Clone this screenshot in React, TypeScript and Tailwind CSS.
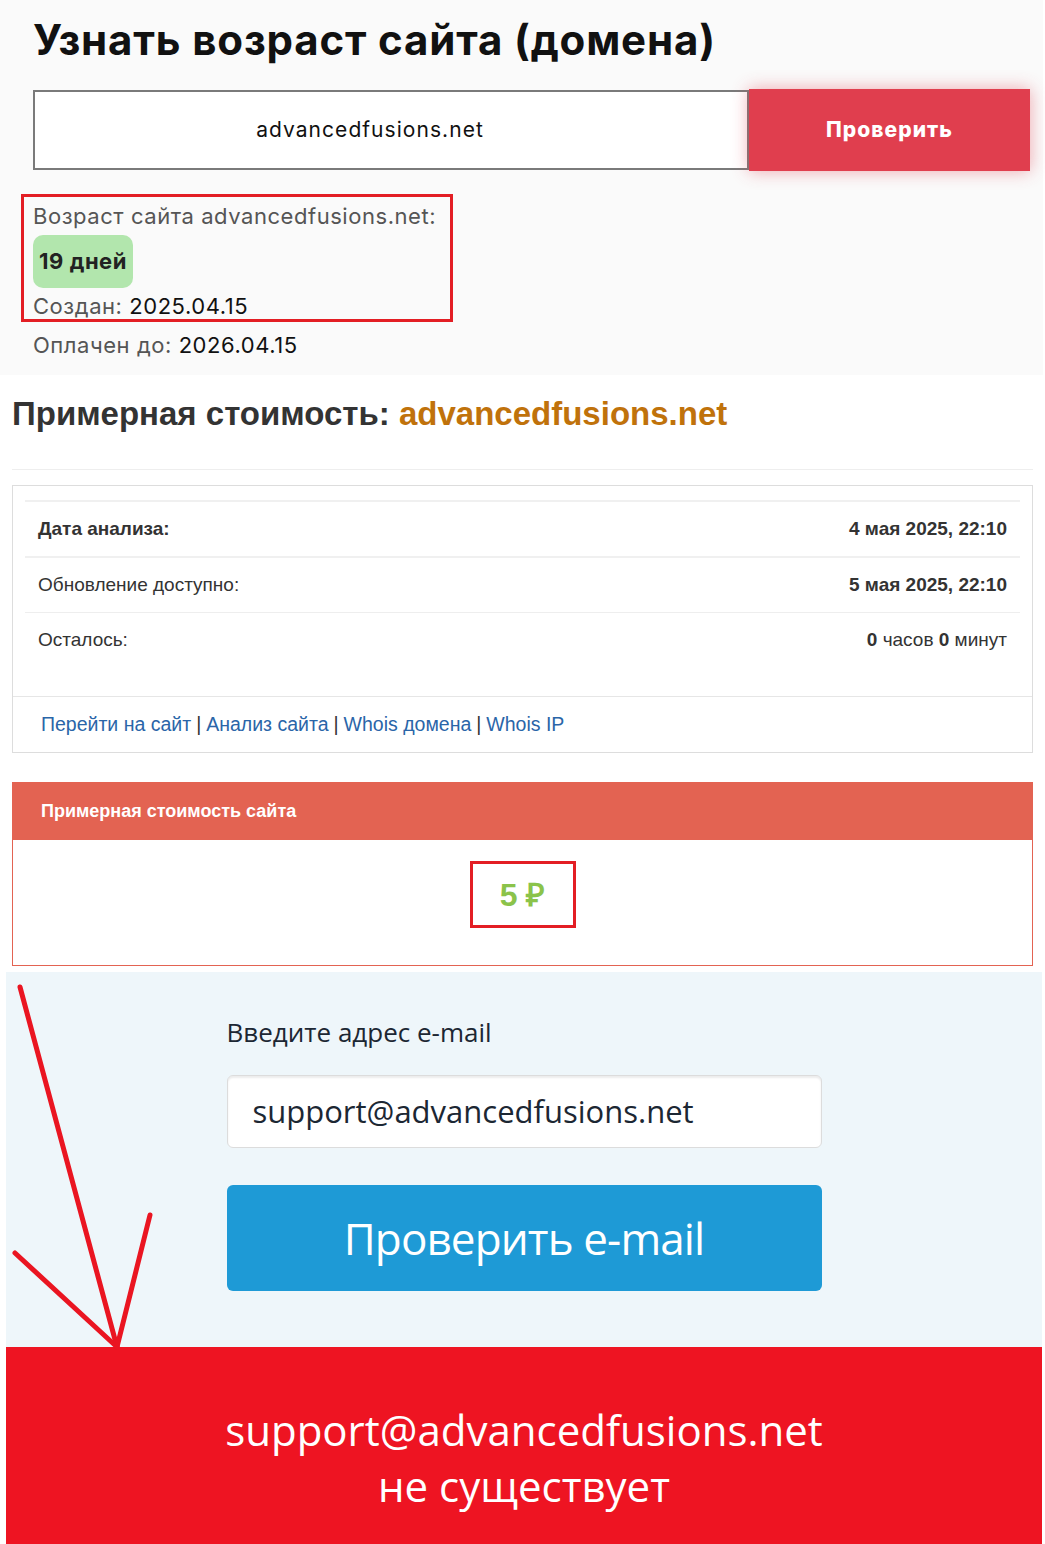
export default function App() {
  return (
    <div className="relative w-[1045px] bg-white">
      {/* Domain age block */}
      <section className="w-[1043px] bg-[#fafafa] pb-[11px] pt-[14px] font-['Inter',sans-serif]">
        <h1 className="pl-[33px] text-[42px] font-bold leading-[52px] tracking-[0.02em] text-[#111]">
          Узнать возраст сайта (домена)
        </h1>
        <div className="mt-[23px] flex items-center pl-[33px]">
          <div className="flex h-[80px] w-[716px] items-center justify-center border-2 border-[#7a7a7a] bg-white pr-[42px] text-[21px] tracking-[0.05em] text-[#111]">
            advancedfusions.net
          </div>
          <button className="h-[82px] w-[281px] bg-[#e03e4e] text-[21px] font-extrabold tracking-[0.05em] text-white shadow-[0_0_16px_rgba(224,62,78,0.45)]">
            Проверить
          </button>
        </div>
        <div className="ml-[21px] mt-[23px] h-[128px] w-[432px] border-[3px] border-[#e31e24] pl-[9px] text-[22px] tracking-[0.025em] text-[#555]">
          <p className="leading-[38px]">Возраст сайта advancedfusions.net:</p>
          <span className="inline-flex h-[53px] items-center rounded-[10px] bg-[#b2e6ad] px-[6px] font-bold text-[#222]">
            19 дней
          </span>
          <p className="leading-[36px]">
            Создан: <span className="text-[#111]">2025.04.15</span>
          </p>
        </div>
        <p className="mt-[4px] pl-[33px] text-[22px] leading-[38px] tracking-[0.025em] text-[#555]">
          Оплачен до: <span className="text-[#111]">2026.04.15</span>
        </p>
      </section>

      {/* Estimated cost */}
      <section className="px-[12px] pb-[6px] pt-[19px] font-['Liberation_Sans',Arial,sans-serif] text-[#333]">
        <h2 className="text-[33px] font-bold leading-[40px]">
          Примерная стоимость: <span className="text-[#c0720b]">advancedfusions.net</span>
        </h2>
        <div className="mt-[35px] border-t border-[#eee]" />
        <div className="mt-[15px] border border-[#ddd]">
          <div className="px-[12px] pt-[14px]">
            <div className="flex h-[56px] items-center justify-between border-t-2 border-[#f0f0f0] px-[13px] text-[19px] font-bold">
              <span>Дата анализа:</span>
              <span>4 мая 2025, 22:10</span>
            </div>
            <div className="flex h-[56px] items-center justify-between border-t-2 border-[#f0f0f0] px-[13px] text-[19px]">
              <span>Обновление доступно:</span>
              <span className="font-bold">5 мая 2025, 22:10</span>
            </div>
            <div className="flex h-[56px] items-center justify-between border-t border-[#eee] px-[13px] text-[19px]">
              <span>Осталось:</span>
              <span>
                <b>0</b> часов <b>0</b> минут
              </span>
            </div>
          </div>
          <div className="mt-[28px] flex h-[56px] items-center border-t border-[#e6e6e6] px-[28px] text-[19.5px] text-[#2a65a8]">
            Перейти на сайт <span className="px-[5px] text-[#333]">|</span> Анализ сайта
            <span className="px-[5px] text-[#333]">|</span> Whois домена
            <span className="px-[5px] text-[#333]">|</span> Whois IP
          </div>
        </div>
        <div className="mt-[29px] border border-[#e36352]">
          <div className="flex h-[57px] items-center bg-[#e36352] px-[28px] text-[18px] font-bold text-white">
            Примерная стоимость сайта
          </div>
          <div className="flex justify-center pb-[37px] pt-[21px]">
            <div className="flex h-[67px] w-[106px] items-center justify-center border-[3px] border-[#e31e24] text-[32px] font-bold text-[#8bc34a]">
              5 ₽
            </div>
          </div>
        </div>
      </section>

      {/* E-mail check */}
      <section className="ml-[6px] w-[1036px] bg-[#eef6fa] pb-[56px] pt-[40px] font-['Open_Sans',sans-serif]">
        <div className="mx-auto w-[595px]">
          <p className="text-[26px] font-medium leading-[40px] text-[#1c2733]">Введите адрес e-mail</p>
          <div className="mt-[23px] flex h-[73px] items-center rounded-[6px] border border-[#dcdcdc] bg-white px-[25px] text-[31px] font-medium text-[#1c2733] shadow-[inset_0_2px_2px_rgba(0,0,0,0.08)]">
            support@advancedfusions.net
          </div>
          <button className="mt-[37px] flex h-[106px] w-full items-center justify-center rounded-[6px] bg-[#1e9ad6] text-[44px] font-medium tracking-[-0.02em] text-white">
            Проверить e-mail
          </button>
        </div>
      </section>
      <section className="ml-[6px] flex h-[197px] w-[1036px] flex-col items-center bg-[#ee1422] pt-[55px] font-['Open_Sans',sans-serif] text-[42px] font-medium leading-[56px] text-white">
        <p>support@advancedfusions.net</p>
        <p>не существует</p>
      </section>

      {/* Hand-drawn arrow annotation */}
      <svg className="pointer-events-none absolute left-0 top-0" width="1045" height="1544">
        <g stroke="#ea1521" strokeWidth="5" strokeLinecap="round" fill="none">
          <line x1="20" y1="987" x2="117" y2="1347" />
          <line x1="150" y1="1215" x2="117" y2="1347" />
          <line x1="15" y1="1253" x2="117" y2="1347" />
        </g>
      </svg>
    </div>
  );
}
